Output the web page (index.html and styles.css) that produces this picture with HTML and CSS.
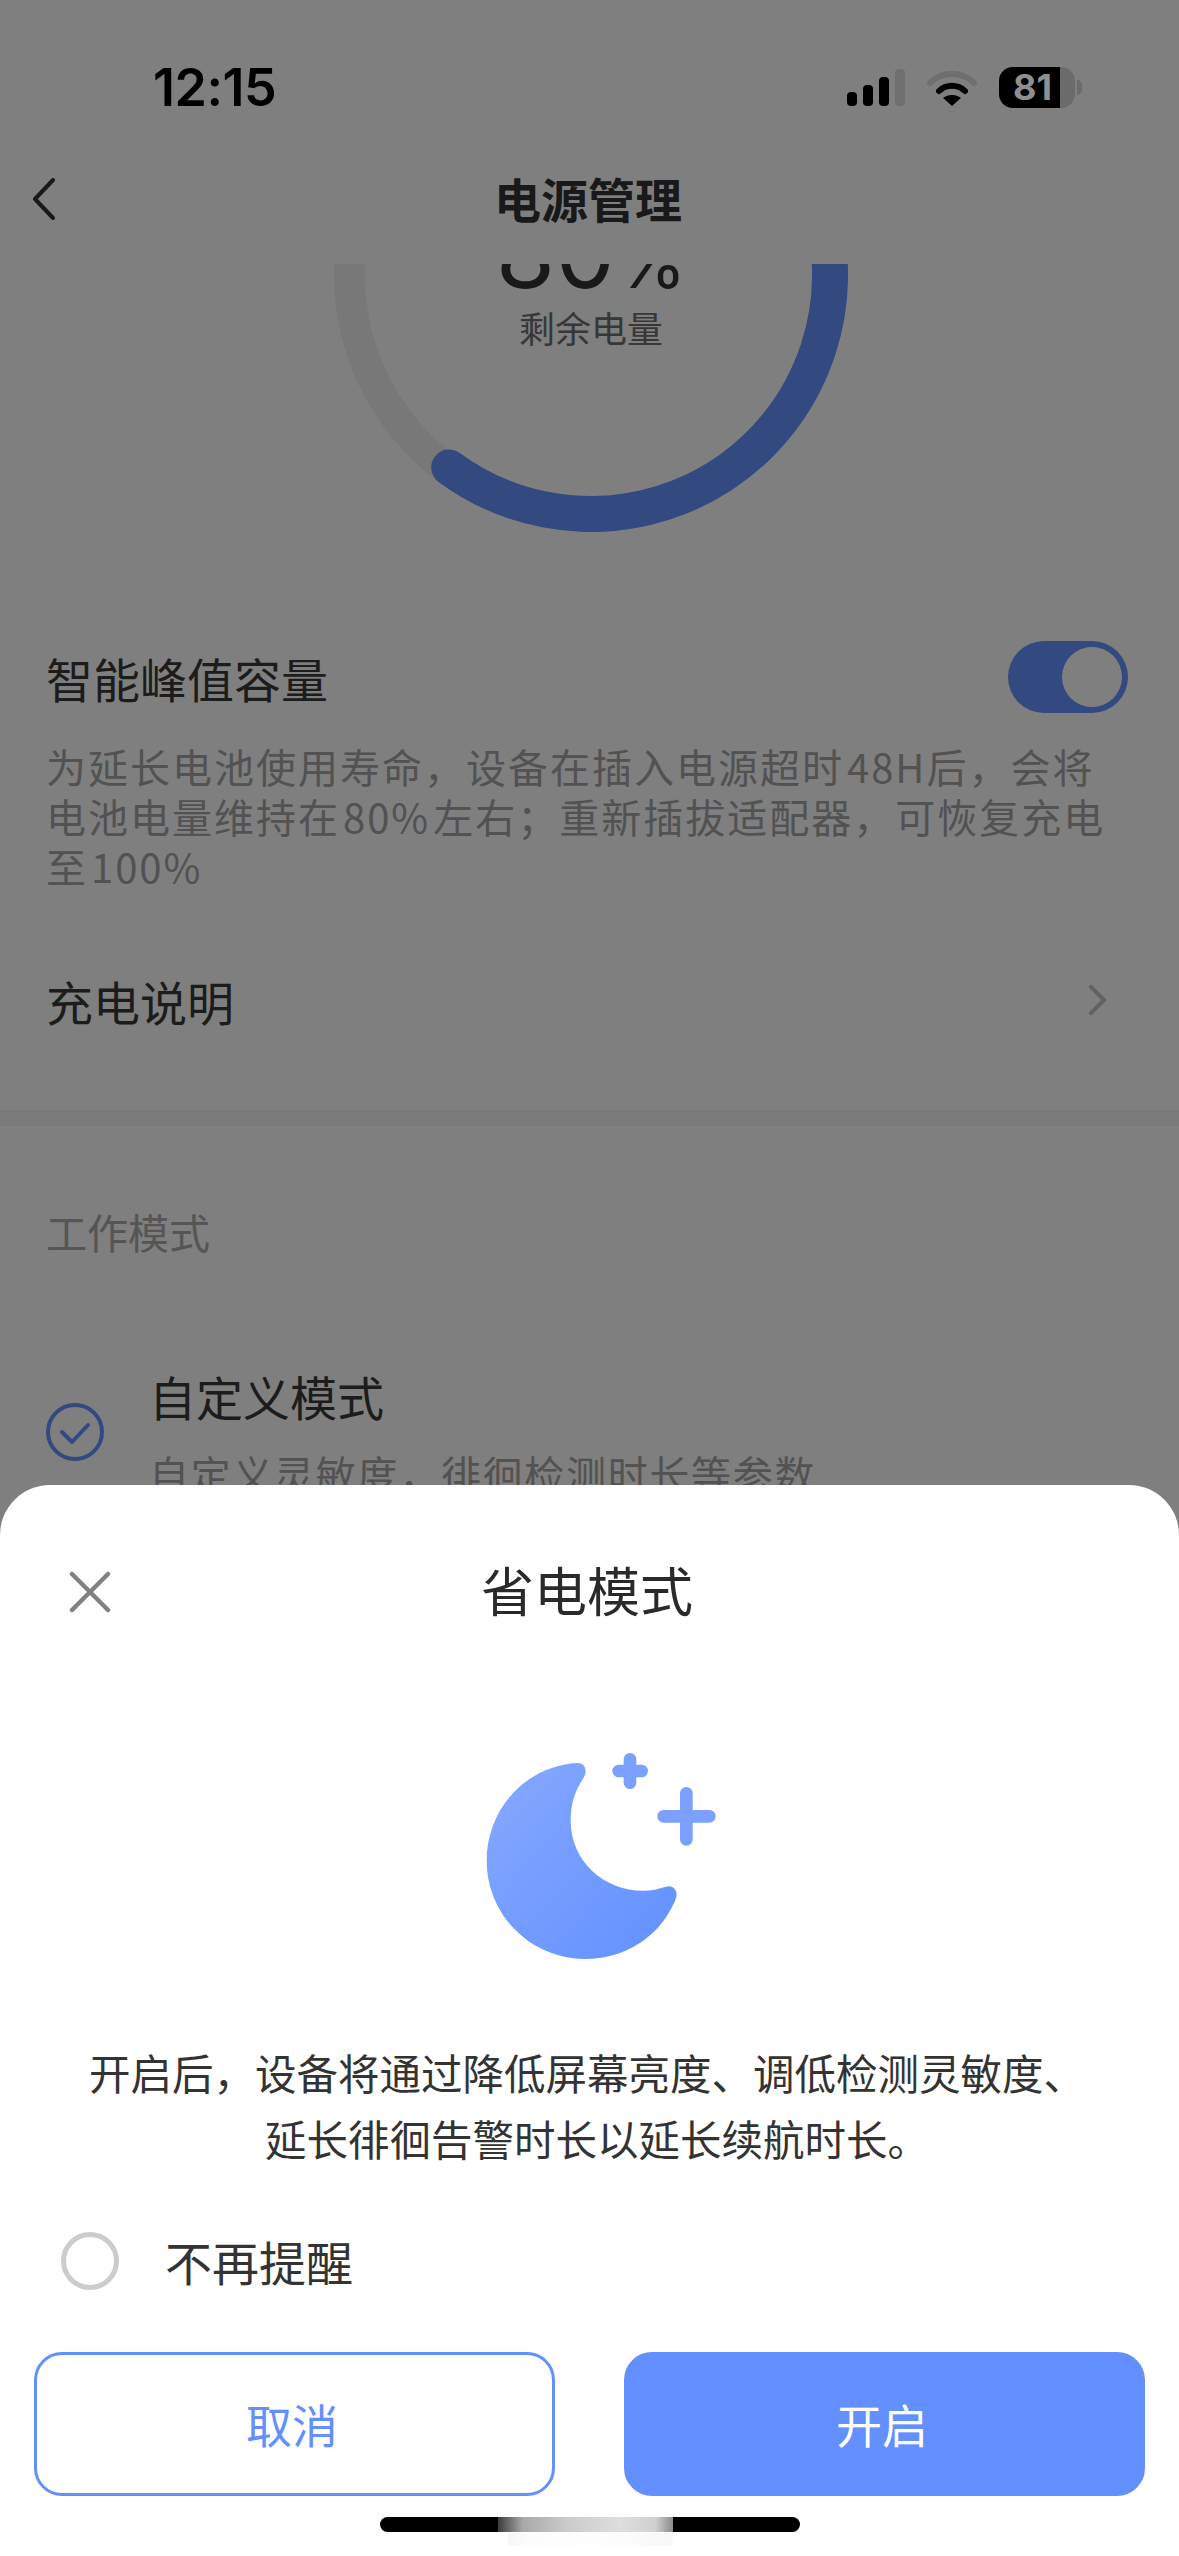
FILE: index.html
```html
<!DOCTYPE html>
<html lang="zh">
<head>
  <meta charset="utf-8">
  <title>电源管理</title>
  <link rel="stylesheet" href="styles.css">
</head>
<body>
  <div class="phone">
    <!-- 状态栏 -->
    <div class="status">
      <span class="time">12:15</span>
      <div class="status-icons">
        <svg class="signal" width="58" height="37" viewBox="0 0 58 37">
          <rect x="0" y="23" width="10" height="14" rx="4" fill="#000"/>
          <rect x="16" y="16" width="10" height="21" rx="4" fill="#000"/>
          <rect x="32" y="8" width="10" height="29" rx="4" fill="#000"/>
          <rect x="48" y="0" width="10" height="37" rx="4" fill="#6f6f6f"/>
        </svg>
        <svg class="wifi" width="50" height="37" viewBox="0 0 50 37">
          <path d="M3 14 C15 2 35 2 47 14" fill="none" stroke="#6f6f6f" stroke-width="6" stroke-linecap="round"/>
          <path d="M12 22 C19 15 31 15 38 22" fill="none" stroke="#000" stroke-width="6" stroke-linecap="round"/>
          <path d="M25 37 L16 29 C21 25 29 25 34 29 Z" fill="#000"/>
        </svg>
        <div class="battery"><span>81</span></div>
      </div>
    </div>

    <!-- 标题栏 -->
    <div class="nav">
      <svg class="back" width="24" height="42" viewBox="0 0 24 42">
        <path d="M21 2 L3 21 L21 40" fill="none" stroke="#333" stroke-width="4" stroke-linecap="round" stroke-linejoin="round"/>
      </svg>
      <h1 class="nav-title">电源管理</h1>
    </div>

    <div class="scroll">
      <div class="gauge">
        <svg width="514" height="514" viewBox="0 0 514 514">
          <circle cx="257" cy="257" r="241.5" fill="none" stroke="#f0f0f0" stroke-width="31"/>
          <path d="M257 18 A239 239 0 1 1 115.2 449.4" fill="none" stroke="#6494ff" stroke-width="36" stroke-linecap="round"/>
        </svg>
        <div class="gauge-label">
          <div class="percent">80<small>%</small></div>
          <div class="gauge-sub">剩余电量</div>
        </div>
      </div>

      <div class="row row-switch">
        <span class="row-title">智能峰值容量</span>
        <div class="switch"><div class="knob"></div></div>
      </div>
      <p class="desc">为延长电池使用寿命，设备在插入电源超时 48H后，会将<br>电池电量维持在 80% 左右；重新插拔适配器，可恢复充电<br>至 100%</p>
      <div class="row row-link">
        <span class="row-title">充电说明</span>
        <svg width="18" height="30" viewBox="0 0 18 30">
          <path d="M2 2 L15 15 L2 28" fill="none" stroke="#c4c4c4" stroke-width="4" stroke-linecap="round" stroke-linejoin="round"/>
        </svg>
      </div>
      <div class="divider"></div>

      <div class="section-title">工作模式</div>
      <div class="mode">
        <svg class="mode-check" width="58" height="58" viewBox="0 0 58 58">
          <circle cx="29" cy="29" r="27" fill="none" stroke="#6494ff" stroke-width="4"/>
          <path d="M16 29 L26 39 L42 22" fill="none" stroke="#6494ff" stroke-width="4" stroke-linecap="round" stroke-linejoin="round"/>
        </svg>
        <div>
          <div class="mode-title">自定义模式</div>
          <div class="mode-sub">自定义灵敏度，徘徊检测时长等参数</div>
        </div>
      </div>
    </div>

    <div class="scrim"></div>

    <!-- 省电模式弹窗 -->
    <div class="sheet">
      <div class="sheet-head">
        <svg class="close" width="42" height="42" viewBox="0 0 42 42">
          <path d="M3 3 L39 39 M39 3 L3 39" fill="none" stroke="#808080" stroke-width="4.5" stroke-linecap="round"/>
        </svg>
        <h2 class="sheet-title">省电模式</h2>
      </div>
      <svg class="moon" width="300" height="270" viewBox="0 0 900 810">
        <defs>
          <linearGradient id="moonFill" x1="0" y1="0" x2="1" y2="1">
            <stop offset="0" stop-color="#87a9ff"/>
            <stop offset="1" stop-color="#6190ff"/>
          </linearGradient>
        </defs>
        <path d="M412 132 Q437 132 437 158 Q437 165 430 178 C405 215 392 255 392 305 C392 425 490 515 610 515 C635 515 655 510 678 503 Q705 497 710 525 Q710 535 702 552 C655 655 555 720 435 720 C272 720 140 588 140 425 C140 270 258 140 412 132 Z" fill="url(#moonFill)"/>
        <path d="M570 121 V191 M536 156 H605" fill="none" stroke="#7ba0ff" stroke-width="38" stroke-linecap="round"/>
        <path d="M739 223 V361 M671 292 H808" fill="none" stroke="#7ba0ff" stroke-width="38" stroke-linecap="round"/>
      </svg>
      <p class="sheet-text">开启后，设备将通过降低屏幕亮度、调低检测灵敏度、<span class="sheet-line">延长徘徊告警时长以延长续航时长。</span></p>
      <div class="remind">
        <span class="radio"></span>
        <span class="remind-text">不再提醒</span>
      </div>
      <div class="actions">
        <button class="btn btn-cancel">取消</button>
        <button class="btn btn-open">开启</button>
      </div>
      <div class="home-bar"><div class="home-blur"></div></div>
    </div>
  </div>
</body>
</html>
```
FILE: styles.css
```css
/* 基础 */
* {
  box-sizing: border-box;
}

body {
  margin: 0;
  background-color: #ffffff;
  font-family: "Noto Sans CJK SC", "Noto Sans", sans-serif;
}

.phone {
  position: relative;
  width: 1179px;
  height: 2556px;
  display: flex;
  flex-direction: column;
  overflow: hidden;
  background-color: #ffffff;
}

/* 状态栏 */
.status {
  position: relative;
  z-index: 3;
  height: 165px;
  flex: none;
  display: flex;
  justify-content: space-between;
  align-items: flex-start;
  padding: 58px 104px 0 153px;
}

.time {
  font-family: Inter, sans-serif;
  font-size: 52px;
  line-height: 60px;
  font-weight: 600;
  letter-spacing: -0.5px;
  color: #000000;
}

.status-icons {
  display: flex;
  align-items: center;
  gap: 22px;
  padding-top: 9px;
}

.battery {
  position: relative;
  width: 76px;
  height: 41px;
  border-radius: 14px;
  background: linear-gradient(90deg, #000000 80%, #6b6b6b 80%);
  color: #8f8f8f;
  font-family: Inter, sans-serif;
  font-size: 36px;
  font-weight: 700;
  line-height: 41px;
  padding-left: 14px;
}

.battery::after {
  content: "";
  position: absolute;
  left: 78px;
  top: 13px;
  width: 5px;
  height: 15px;
  border-radius: 0 8px 8px 0;
  background-color: #6b6b6b;
}

/* 标题栏 */
.nav {
  position: relative;
  height: 99px;
  flex: none;
  display: flex;
  align-items: center;
  justify-content: center;
  padding: 0 3px 34px 0;
}

.nav-title {
  margin: 0;
  font-size: 47px;
  line-height: 60px;
  font-weight: 700;
  color: #333333;
}

.back {
  position: absolute;
  left: 32px;
  top: 13px;
}

/* 内容 */
.scroll {
  flex: 1;
  overflow: hidden;
}

.gauge {
  position: relative;
  width: 514px;
  height: 514px;
  margin: -246px 0 0 334px;
}

.gauge svg {
  display: block;
}

.gauge-label {
  position: absolute;
  left: 0;
  right: 0;
  top: 185px;
  text-align: center;
}

.percent {
  font-family: Inter, sans-serif;
  font-size: 96px;
  line-height: 100px;
  color: #333333;
}

.percent small {
  font-size: 72px;
}

.gauge-sub {
  margin-top: -11px;
  font-size: 36px;
  line-height: 52px;
  color: #6e6e6e;
}

.row {
  display: flex;
  align-items: center;
  justify-content: space-between;
}

.row-switch {
  margin: 109px 51px 0 46px;
  height: 72px;
}

.row-title {
  font-size: 47px;
  color: #383838;
}

.switch {
  width: 120px;
  height: 72px;
  padding: 6px;
  border-radius: 36px;
  background-color: #6494ff;
  display: flex;
  justify-content: flex-end;
}

.knob {
  width: 60px;
  height: 60px;
  border-radius: 50%;
  background-color: #ffffff;
}

.desc {
  margin: 28px 46px 0;
  font-size: 40px;
  line-height: 50px;
  letter-spacing: 2px;
  word-spacing: -8px;
  color: #a4a4a4;
  white-space: nowrap;
}

.row-link {
  margin: 74px 72px 0 46px;
  height: 70px;
}

.divider {
  height: 16px;
  margin-top: 75px;
  background-color: #f5f5f5;
}

.section-title {
  margin: 77px 46px 0;
  font-size: 41px;
  line-height: 56px;
  color: #aaaaaa;
}

.mode {
  display: flex;
  align-items: flex-start;
  gap: 45px;
  margin: 102px 46px 0;
}

.mode-check {
  flex: none;
  margin-top: 42px;
}

.mode-title {
  font-size: 47px;
  line-height: 70px;
  color: #383838;
}

.mode-sub {
  margin-top: 14px;
  font-size: 40px;
  line-height: 56px;
  letter-spacing: 1.7px;
  color: #a4a4a4;
  white-space: nowrap;
}

/* 遮罩 */
.scrim {
  position: absolute;
  inset: 0;
  z-index: 1;
  background-color: rgba(0, 0, 0, 0.5);
}

/* 弹窗 */
.sheet {
  position: absolute;
  left: 0;
  right: 0;
  bottom: 0;
  z-index: 2;
  height: 1071px;
  border-radius: 50px 50px 0 0;
  background-color: #ffffff;
  display: flex;
  flex-direction: column;
  align-items: center;
}

.sheet-head {
  position: relative;
  width: 100%;
  height: 80px;
  margin-top: 64px;
  padding-right: 5px;
  text-align: center;
}

.sheet-title {
  margin: 0;
  font-size: 53px;
  line-height: 80px;
  font-weight: 400;
  color: #2a2a2a;
}

.close {
  position: absolute;
  left: 69px;
  top: 22px;
}

.moon {
  display: block;
  margin: 90px 0 0 0;
  flex: none;
}

.sheet-text {
  margin: 50px 5px 0 0;
  font-size: 41.5px;
  line-height: 66px;
  text-align: center;
  color: #333333;
  white-space: nowrap;
}

.sheet-line {
  display: block;
  padding-left: 20px;
}

.remind {
  align-self: flex-start;
  display: flex;
  align-items: center;
  gap: 46px;
  margin: 58px 0 0 61px;
}

.radio {
  width: 58px;
  height: 58px;
  border: 5px solid #cccccc;
  border-radius: 50%;
}

.remind-text {
  font-size: 47px;
  line-height: 64px;
  color: #333333;
}

.actions {
  display: flex;
  justify-content: space-between;
  width: 100%;
  padding: 0 34px;
  margin-top: 59px;
}

.btn {
  width: 521px;
  height: 144px;
  padding: 0 5px 2px 0;
  border-radius: 28px;
  border: 3px solid #648ffe;
  font-family: inherit;
  font-size: 46px;
}

.btn-cancel {
  background-color: #ffffff;
  color: #648ffe;
}

.btn-open {
  background-color: #648ffe;
  color: #ffffff;
}

.home-bar {
  position: relative;
  width: 420px;
  height: 15px;
  margin-top: 21px;
  border-radius: 8px;
  background-color: #000000;
}

.home-blur {
  position: absolute;
  left: 118px;
  top: 0;
  width: 175px;
  height: 15px;
  background: linear-gradient(90deg, #3c3c3c, #a8a8a8 14%, #cccccc 40%, #dedede 70%, #d0d0d0 90%, #8a8a8a);
}

/* 底部的模糊残影 */
.home-blur::after {
  content: "";
  position: absolute;
  left: 10px;
  top: 16px;
  width: 165px;
  height: 13px;
  background: linear-gradient(90deg, #f6f6f6, #fcfcfc 12%, #fefefe 50%, #f8f8f8);
}
```
